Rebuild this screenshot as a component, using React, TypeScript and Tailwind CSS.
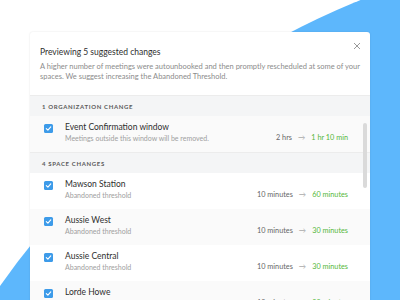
import React from 'react';

const spaces = [
  { name: 'Mawson Station', from: '10 minutes', to: '60 minutes', shade: false },
  { name: 'Aussie West', from: '10 minutes', to: '30 minutes', shade: true },
  { name: 'Aussie Central', from: '10 minutes', to: '30 minutes', shade: false },
  { name: 'Lorde Howe', from: '10 minutes', to: '30 minutes', shade: true },
];

const Check = () => (
  <div className="w-[9px] h-[9px] rounded-[1.5px] bg-[#3d9be9] flex items-center justify-center shrink-0">
    <svg width="7" height="7" viewBox="0 0 8 8" fill="none">
      <path d="M1.5 4.2 L3.3 5.9 L6.6 2.2" stroke="white" strokeWidth="1.3" strokeLinecap="round" strokeLinejoin="round" />
    </svg>
  </div>
);

type RowProps = { name: string; sub: string; from: string; to: string; shade: boolean };

const ChangeRow = ({ name, sub, from, to, shade }: RowProps) => (
  <div className={`h-[36px] flex pl-[14px] pr-[22px] pt-[6px] ${shade ? 'bg-[#fafafa]' : 'bg-white'}`}>
    <div className="pt-[2px]">
      <Check />
    </div>
    <div className="ml-[12px] flex-1">
      <div className="text-[8.5px] leading-[11px] text-[#2e2e2e]">{name}</div>
      <div className="text-[7px] leading-[10px] text-[#a0a0a0]">{sub}</div>
    </div>
    <div className="self-end mb-[9px] flex items-center text-[7.3px] leading-[10px]">
      <span className="text-[#666]">{from}</span>
      <span className="mx-[6px] text-[#aaa]">→</span>
      <span className="text-[#55b83a]">{to}</span>
    </div>
  </div>
);

const SectionHeader = ({ label }: { label: string }) => (
  <div className="h-[21px] flex items-center px-[12px] bg-[#f4f5f6] border-t border-[#ececec] text-[6px] font-bold tracking-[0.11em] text-[#5a5a5a] uppercase">
    {label}
  </div>
);

export default function App() {
  return (
    <div className="relative w-[400px] h-[300px] overflow-hidden bg-white" style={{ fontFamily: 'Lato, "Open Sans", sans-serif' }}>
      {/* blue blob behind the card */}
      <div className="absolute left-[-150px] top-[-60px] w-[1636px] h-[1636px] rounded-full bg-[#5db7fc]" />

      <div className="relative ml-[30px] mt-[32px] w-[340px] h-[280px] bg-white rounded-[3px] shadow-[0_0_2px_rgba(0,0,0,0.12)] overflow-hidden">
        <div className="relative px-[10px] pt-[15px] pb-[13px]">
          <div className="text-[8.5px] leading-[11px] text-[#2e2e2e]">Previewing 5 suggested changes</div>
          <div className="mt-[4px] text-[7.5px] leading-[10px] text-[#8c8c8c]">
            A higher number of meetings were autounbooked and then promptly rescheduled at some of your spaces. We suggest increasing the Abandoned Threshold.
          </div>
          <svg className="absolute right-[9px] top-[10px]" width="8" height="8" viewBox="0 0 8 8">
            <path d="M1 1 L7 7 M7 1 L1 7" stroke="#9a9a9a" strokeWidth="1" />
          </svg>
        </div>

        <div className="relative">
          <SectionHeader label="1 Organization change" />
          <ChangeRow name="Event Confirmation window" sub="Meetings outside this window will be removed." from="2 hrs" to="1 hr 10 min" shade={true} />
          <SectionHeader label="4 Space changes" />
          {spaces.map((s) => (
            <ChangeRow key={s.name} name={s.name} sub="Abandoned threshold" from={s.from} to={s.to} shade={s.shade} />
          ))}
          <div className="absolute right-[3px] top-[28px] w-[4px] h-[65px] rounded-full bg-[#dadada]" />
        </div>
      </div>
    </div>
  );
}
